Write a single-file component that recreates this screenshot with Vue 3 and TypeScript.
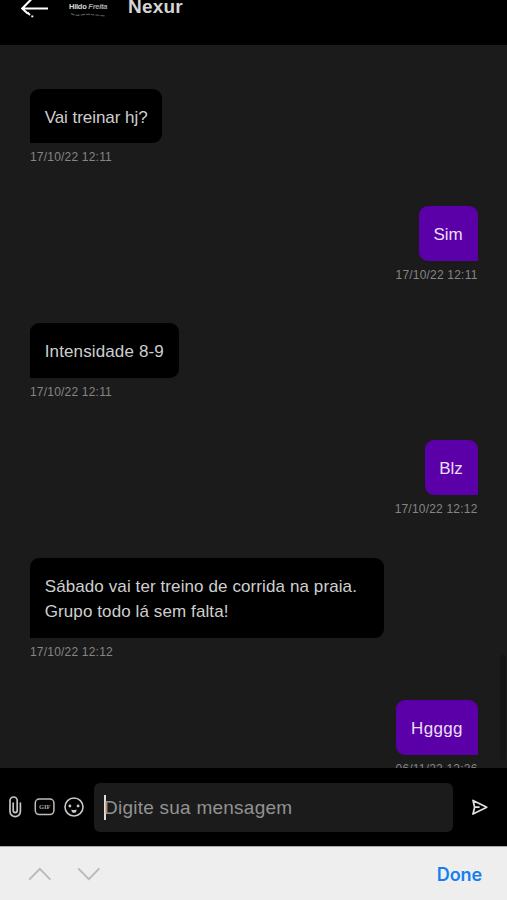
<script setup lang="ts">
interface Message {
  id: number
  text: string
  time: string
  mine: boolean
  tracking: number
}

const messages: Message[] = [
  { id: 1, text: 'Vai treinar hj?', time: '17/10/22 12:11', mine: false, tracking: -0.05 },
  { id: 2, text: 'Sim', time: '17/10/22 12:11', mine: true, tracking: 0.05 },
  { id: 3, text: 'Intensidade 8-9', time: '17/10/22 12:11', mine: false, tracking: 0.13 },
  { id: 4, text: 'Blz', time: '17/10/22 12:12', mine: true, tracking: 0 },
  {
    id: 5,
    text: 'Sábado vai ter treino de corrida na praia. Grupo todo lá sem falta!',
    time: '17/10/22 12:12',
    mine: false,
    tracking: 0.1,
  },
  { id: 6, text: 'Hgggg', time: '06/11/22 12:26', mine: true, tracking: 0.32 },
]
</script>

<template>
  <div class="screen">
    <header class="header">
      <svg class="back" width="28" height="20" viewBox="0 0 28 20" fill="none" stroke="#fff" stroke-width="2.1">
        <path d="M27 8.5H1.5M10.5 -1L1.2 8.5L7 13.8" />
        <path d="M6.5 12.5L9 15M10.3 16.4h2" stroke-width="1.8" />
      </svg>
      <div class="avatar">
        <span class="avatar-name">Hildo <i>Freita</i></span>
        <svg width="40" height="5" viewBox="0 0 40 5" fill="none" stroke="#555" stroke-width="1.2">
          <path d="M2 1.5Q6 4 12 3T22 2.5T36 4" stroke-dasharray="4 1" />
        </svg>
      </div>
      <h1 class="title">Nexur</h1>
    </header>

    <main class="chat">
      <article v-for="m in messages" :key="m.id" class="message" :class="{ mine: m.mine }">
        <div class="bubble" :style="{ letterSpacing: m.tracking + 'px' }">{{ m.text }}</div>
        <time class="time">{{ m.time }}</time>
      </article>
      <div class="scrollbar"></div>
    </main>

    <section class="composer">
      <svg class="clip" width="14" height="24" viewBox="0 0 14 24" fill="none" stroke="#c4c4c4" stroke-width="1.7" stroke-linecap="round">
        <path d="M5.2 8V15.6A2 2 0 0 0 9.2 15.6V5.6A3.6 3.6 0 0 0 2 5.6V16.4A5.2 5.2 0 0 0 12.4 16.4V8" />
      </svg>
      <svg class="gif" width="22" height="20" viewBox="0 0 22 20">
        <rect x="1.3" y="2" width="18.6" height="15.6" rx="4" fill="none" stroke="#bdbdbd" stroke-width="1.5" />
        <text x="10.7" y="12.4" text-anchor="middle" class="gif-text" textLength="11.5">GIF</text>
      </svg>
      <svg class="smile" width="20" height="20" viewBox="0 0 20 20">
        <circle cx="10" cy="10" r="9" fill="none" stroke="#c8c8c8" stroke-width="1.6" />
        <circle cx="5.9" cy="9" r="1.4" fill="#ccc" />
        <circle cx="14.1" cy="9" r="1.4" fill="#ccc" />
        <path d="M7.4 12.4L9 13H11L12.6 12.4Q12.6 15.8 10 15.8T7.4 12.4Z" fill="#ccc" />
      </svg>
      <div class="input">
        <span class="caret"></span>
        <span class="placeholder">Digite sua mensagem</span>
      </div>
      <svg class="send" width="18" height="18" viewBox="0 0 18 18" fill="none" stroke="#e0e0e0" stroke-width="1.7" stroke-linejoin="round">
        <path d="M2 2.4L15.8 9.2L2 16L3.6 9.2ZM3.6 9.2H8.6" />
      </svg>
    </section>

    <footer class="accessory">
      <svg width="24" height="14" viewBox="0 0 24 14" fill="none" stroke="#b9b9b9" stroke-width="1.9">
        <path d="M1.2 12.6L11.8 1.8L22.4 12.6" />
      </svg>
      <svg width="24" height="14" viewBox="0 0 24 14" fill="none" stroke="#b9b9b9" stroke-width="1.9">
        <path d="M1.2 1.4L11.8 12.2L22.4 1.4" />
      </svg>
      <span class="done">Done</span>
    </footer>
  </div>
</template>

<style>
body {
  background: #1b1b1b;
  overflow: hidden;
}
</style>

<style scoped>
.screen {
  display: flex;
  flex-direction: column;
  width: 507px;
  height: 900px;
  overflow: hidden;
  background: #1b1b1b;
  font-family: 'Liberation Sans', Arial, sans-serif;
}
.header {
  display: flex;
  flex: none;
  height: 44.5px;
  background: #000;
}
.back {
  margin-left: 21px;
}
.avatar {
  width: 40px;
  margin: 1px 0 0 20px;
  color: #ddd;
  font-size: 7.5px;
  font-weight: bold;
  line-height: 11px;
}
.avatar-name {
  display: block;
  white-space: nowrap;
  letter-spacing: -0.25px;
}
.avatar-name i {
  color: #aaa;
}
.avatar svg {
  display: block;
}
.title {
  margin: -5px 0 0 19px;
  color: #d4d4d4;
  font-size: 19px;
  line-height: 24px;
  letter-spacing: 0.2px;
}
.chat {
  position: relative;
  flex: none;
  height: 723.5px;
  padding: 44px 29.5px 0 30px;
  box-sizing: border-box;
  overflow: hidden;
}
.message {
  display: flex;
  flex-direction: column;
  align-items: flex-start;
  margin-bottom: 40.4px;
}
.mine {
  align-items: flex-end;
}
.bubble {
  max-width: 354px;
  padding: 16px 14.7px 13.4px;
  box-sizing: border-box;
  border-radius: 9px 9px 9px 0;
  background: #000;
  color: #cfcfcf;
  font-size: 17px;
  line-height: 25.5px;
}
.mine .bubble {
  border-radius: 9px 9px 0 9px;
  background: #5b00a8;
  color: #eadff3;
}
.time {
  margin-top: 6px;
  color: #858585;
  font-size: 12px;
  line-height: 16px;
  letter-spacing: 0.2px;
}
.scrollbar {
  position: absolute;
  top: 610px;
  right: 1px;
  width: 6px;
  height: 105px;
  border-radius: 3px;
  background: #151515;
}
.composer {
  display: flex;
  flex: none;
  align-items: center;
  height: 78px;
  padding-left: 8px;
  background: #000;
}
.gif {
  margin-left: 12px;
}
.gif-text {
  fill: #aaa;
  font: bold 6.5px 'Liberation Serif', serif;
}
.smile {
  margin-left: 8px;
}
.input {
  display: flex;
  align-items: center;
  width: 359px;
  height: 49px;
  margin-left: 10px;
  padding-left: 10px;
  box-sizing: border-box;
  border-radius: 6px;
  background: #1b1b1b;
}
.caret {
  width: 2px;
  height: 25px;
  background: #ddd;
}
.placeholder {
  margin: 2px 0 0 -2px;
  color: #929292;
  font-size: 19px;
  letter-spacing: 0.24px;
  white-space: nowrap;
}
.send {
  margin-left: 18px;
}
.accessory {
  display: flex;
  flex: none;
  align-items: center;
  gap: 25px;
  height: 54px;
  padding: 0 25px 0 28px;
  box-sizing: border-box;
  border-top: 1px solid #aaa;
  background: #eee;
}
.done {
  margin: 1px 0 0 auto;
  color: #167ff0;
  font-family: Inter, sans-serif;
  font-size: 18px;
  font-weight: 600;
  letter-spacing: -0.1px;
}
</style>
